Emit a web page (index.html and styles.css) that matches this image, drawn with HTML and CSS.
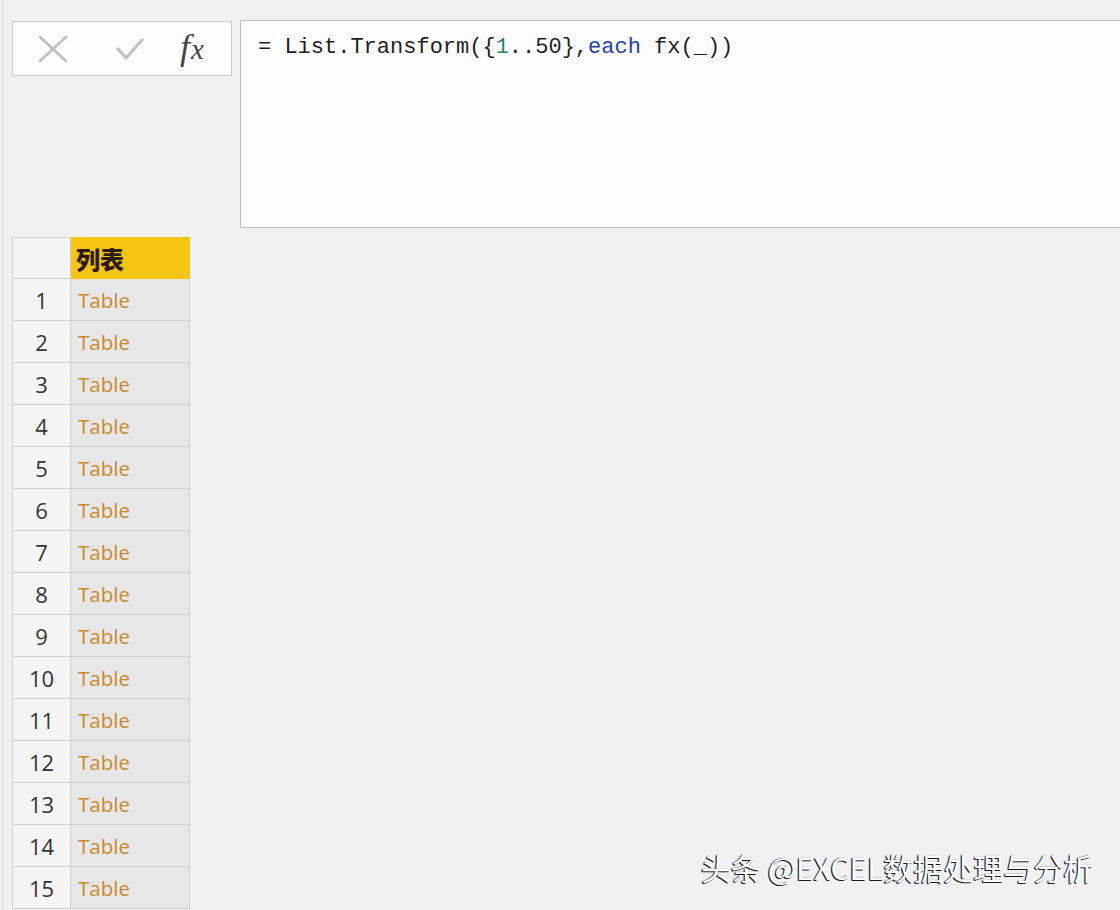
FILE: index.html
```html
<!DOCTYPE html>
<html lang="zh">
<head>
<meta charset="utf-8">
<title>Power Query</title>
<link rel="stylesheet" href="styles.css">
</head>
<body>
<div class="page">
  <div class="topbar">
    <div class="tools">
      <svg class="ic-x" width="32" height="30" viewBox="0 0 32 30"><path d="M3 3 L29 27 M29 3 L3 27" stroke="#c2c2c2" stroke-width="3" stroke-linecap="round" fill="none"/></svg>
      <svg class="ic-ok" width="28" height="24" viewBox="0 0 28 24"><path d="M2 12 L10 21 L26 3" stroke="#c2c2c2" stroke-width="3.2" stroke-linecap="round" stroke-linejoin="round" fill="none"/></svg>
      <span class="fx"><i>f</i><i class="x">x</i></span>
    </div>
    <div class="formula"><span class="eq">= List.Transform({<span class="num">1</span>..50},<span class="kw">each</span> fx(_))</span></div>
  </div>
  <table class="grid">
    <thead>
      <tr><th class="rn"></th><th class="col">列表</th></tr>
    </thead>
    <tbody>
      <tr><td class="rn">1</td><td class="cell">Table</td></tr>
      <tr><td class="rn">2</td><td class="cell">Table</td></tr>
      <tr><td class="rn">3</td><td class="cell">Table</td></tr>
      <tr><td class="rn">4</td><td class="cell">Table</td></tr>
      <tr><td class="rn">5</td><td class="cell">Table</td></tr>
      <tr><td class="rn">6</td><td class="cell">Table</td></tr>
      <tr><td class="rn">7</td><td class="cell">Table</td></tr>
      <tr><td class="rn">8</td><td class="cell">Table</td></tr>
      <tr><td class="rn">9</td><td class="cell">Table</td></tr>
      <tr><td class="rn">10</td><td class="cell">Table</td></tr>
      <tr><td class="rn">11</td><td class="cell">Table</td></tr>
      <tr><td class="rn">12</td><td class="cell">Table</td></tr>
      <tr><td class="rn">13</td><td class="cell">Table</td></tr>
      <tr><td class="rn">14</td><td class="cell">Table</td></tr>
      <tr><td class="rn">15</td><td class="cell">Table</td></tr>
    </tbody>
  </table>
  <div class="watermark">头条 @EXCEL数据处理与分析</div>
</div>
</body>
</html>
```
FILE: styles.css
```css
html, body {
  margin: 0;
  padding: 0;
  background: #f2f1f2;
}
body {
  width: 1120px;
  height: 910px;
  overflow: hidden;
  font-family: "Open Sans", "Noto Sans", "Noto Sans CJK SC", sans-serif;
}
.page {
  position: relative;
  height: 910px;
  margin-left: 2px;
  border-left: 1px solid #d6d5d6;
  padding: 20px 0 0 9px;
  box-sizing: border-box;
}
.topbar {
  display: flex;
  align-items: flex-start;
  gap: 8px;
}
.tools {
  margin-top: 1px;
  width: 218px;
  height: 53px;
  background: #fcfcfc;
  border: 1px solid #c9c9c9;
  display: flex;
  align-items: center;
}
.tools svg { display: block; }
.ic-x { margin-left: 24px; }
.ic-ok { margin-left: 47px; }
.fx {
  margin-left: 36px;
  font-family: "Liberation Serif", "DejaVu Serif", serif;
  font-size: 36px;
  color: #454545;
  line-height: 1;
  padding-bottom: 4px;
}
.fx i { font-style: italic; }
.fx .x { font-size: 29px; margin-left: 1px; }
.formula {
  flex: 1;
  height: 208px;
  background: #fdfcfd;
  border: 1px solid #bfbfbf;
  border-right: none;
  padding: 14px 0 0 17px;
  box-sizing: border-box;
}
.eq {
  font-family: "Liberation Mono", "DejaVu Sans Mono", monospace;
  font-size: 22px;
  color: #1e1e1e;
}
.num { color: #2a7f7a; }
.kw { color: #2443a8; }
.grid {
  margin-top: 9px;
  border-collapse: collapse;
  border: 1px solid #cfcfcf;
}
.grid th, .grid td {
  border: 1px solid #cfcfcf;
  padding: 0;
  box-sizing: border-box;
}
.grid th { height: 41px; }
.grid th.rn {
  width: 58px;
  background: #f4f4f4;
}
.grid th.col {
  width: 119px;
  background: #f8c512;
  border-color: #f8c512;
  text-align: left;
  padding-left: 5px;
  font-family: "Noto Sans CJK SC", sans-serif;
  font-weight: 900;
  font-size: 24px;
  color: #2b1c05;
}
.grid td.rn {
  background: #f5f5f5;
  text-align: center;
  font-size: 22px;
  color: #333;
  height: 42px;
}
.grid td.cell {
  background: #e8e7e8;
  padding-left: 7px;
  font-size: 20.5px;
  color: #c98a2e;
  height: 42px;
}
.watermark {
  position: absolute;
  left: 698px;
  top: 845px;
  font-family: "Noto Sans CJK SC", sans-serif;
  font-size: 30px;
  color: #ffffff;
  text-shadow: -1px 1px 0 #1a1a1a, -1px 0 1px #333;
  white-space: nowrap;
}
```
